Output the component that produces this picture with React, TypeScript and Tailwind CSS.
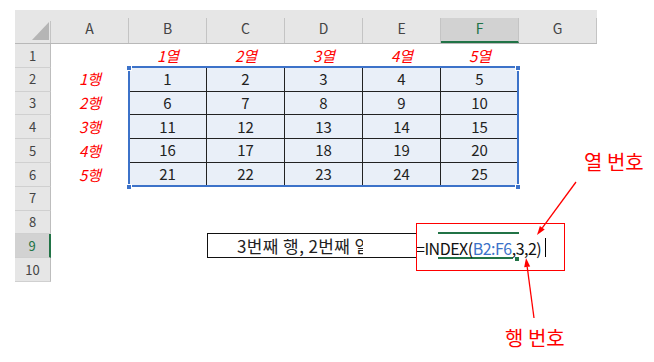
import React from 'react'

const COLS = ['A', 'B', 'C', 'D', 'E', 'F', 'G']
const TABLE = [
  [1, 2, 3, 4, 5],
  [6, 7, 8, 9, 10],
  [11, 12, 13, 14, 15],
  [16, 17, 18, 19, 20],
  [21, 22, 23, 24, 25],
]

function RowHead({ n, active }: { n: number; active?: boolean }) {
  return (
    <div
      className={
        active
          ? 'w-[36px] h-full shrink-0 flex items-center justify-center text-[13px] bg-[#d2d2d2] text-[#217346] border-b border-b-[#cfcfcf] border-r-2 border-r-[#217346]'
          : 'w-[36px] h-full shrink-0 flex items-center justify-center text-[13px] bg-[#e6e6e6] text-[#444] border-b border-b-[#d0d0d0] border-r border-r-[#bdbdbd]'
      }
    >
      {n}
    </div>
  )
}

const Empty = () => <div className="w-[78px] h-full shrink-0" />

const RedLabel = ({ children }: any) => (
  <div className="w-[78px] h-full shrink-0 flex items-center justify-center text-[15px] italic text-[#ff0000]">{children}</div>
)

export default function App() {
  return (
    <div className="relative w-[654px] h-[362px] bg-white overflow-hidden font-['Noto_Sans_CJK_KR',sans-serif]">
      <div className="pt-[10px] pl-[15px]">
        {/* column headers */}
        <div className="flex h-[34px] w-[582px] bg-[#e6e6e6] border-b border-[#b8b8b8]">
          <div className="w-[36px] flex flex-col">
            <div className="h-[11px]" />
            <div className="flex-1 border-r border-[#c4c4c4]">
              <svg width="35" height="22" viewBox="0 0 35 22">
                <polygon points="17,19 34,19 34,1" fill="#b5b5b5" />
              </svg>
            </div>
          </div>
          {COLS.map(c => (
            <div key={c} className="w-[78px] flex flex-col">
              <div className="h-[11px]" />
              {c === 'F' ? (
                <div className="flex-1 bg-[#d2d2d2] border-r border-[#c4c4c4] border-b-2 border-b-[#217346] flex items-center justify-center pb-[2px] text-[14px] text-[#217346]">{c}</div>
              ) : (
                <div className="flex-1 border-r border-[#c4c4c4] flex items-center justify-center pb-[4px] text-[14px] text-[#444]">{c}</div>
              )}
            </div>
          ))}
        </div>

        {/* row 1 */}
        <div className="flex h-[23.8px]">
          <RowHead n={1} />
          <Empty />
          {[1, 2, 3, 4, 5].map(i => <RedLabel key={i}>{i}열</RedLabel>)}
          <Empty />
        </div>

        {/* rows 2-6: data table */}
        {TABLE.map((row, r) => (
          <div key={r} className="flex h-[23.8px]">
            <RowHead n={r + 2} />
            <RedLabel>{r + 1}행</RedLabel>
            {row.map(v => (
              <div key={v} className="w-[78px] h-full shrink-0 flex items-center justify-center text-[15px] text-[#222] bg-[#e9eff8] border-r border-b border-[#222]">{v}</div>
            ))}
            <Empty />
          </div>
        ))}

        {[7, 8].map(n => (
          <div key={n} className="flex h-[23.8px]">
            <RowHead n={n} />
          </div>
        ))}

        {/* row 9 */}
        <div className="flex h-[23.8px]">
          <RowHead n={9} active />
          <Empty />
          <Empty />
          <div className="w-[210px] -mt-px h-[24.8px] shrink-0 border-y border-l border-[#111]">
            <div className="w-[155px] h-full overflow-hidden whitespace-nowrap pl-[29px] flex items-center text-[17px] tracking-[0.4px] text-[#222]">3번째 행, 2번째 열</div>
          </div>
        </div>

        <div className="flex h-[23.8px]">
          <RowHead n={10} />
        </div>
      </div>

      {/* range highlight B2:F6 */}
      <div className="absolute left-[128px] top-[66px] w-[391px] h-[121px] border-2 border-[#3c72c9]" />
      <div className="absolute left-[126px] top-[65px] w-[6px] h-[6px] bg-[#3c72c9] border border-white" />
      <div className="absolute left-[515px] top-[65px] w-[6px] h-[6px] bg-[#3c72c9] border border-white" />
      <div className="absolute left-[126px] top-[184px] w-[6px] h-[6px] bg-[#3c72c9] border border-white" />
      <div className="absolute left-[515px] top-[184px] w-[6px] h-[6px] bg-[#3c72c9] border border-white" />

      {/* active cell F9 */}
      <div className="absolute left-[438px] top-[232px] w-[81px] h-[2px] bg-[#217346]" />
      <div className="absolute left-[438px] top-[257px] w-[75px] h-[2px] bg-[#217346]" />
      <div className="absolute left-[514px] top-[256px] w-[6px] h-[6px] bg-[#217346] border border-white" />

      {/* formula in edit mode */}
      <div className="absolute left-[416px] top-[237px] leading-[22px] text-[16px] tracking-[-0.5px] text-[#111] whitespace-nowrap">
        =INDEX(<span className="text-[#3c72c9]">B2:F6</span>,3,2)
      </div>
      <div className="absolute left-[545px] top-[238px] w-px h-[19px] bg-black" />

      {/* annotation box */}
      <div className="absolute left-[416px] top-[223px] w-[149px] h-[48px] border-[1.5px] border-[#ff0000]" />

      <div className="absolute left-[584px] top-[152px] text-[20px] leading-none text-[#ff0000] whitespace-nowrap">열 번호</div>
      <div className="absolute left-[505px] top-[328px] text-[20px] leading-none text-[#ff0000] whitespace-nowrap">행 번호</div>

      <svg className="absolute left-0 top-0 pointer-events-none" width="654" height="362" viewBox="0 0 654 362">
        <line x1="576" y1="182" x2="542.3" y2="227.8" stroke="#ff0000" strokeWidth="1.3" />
        <polygon points="537,235 544.7,229.5 539.9,226" fill="#ff0000" />
        <line x1="534" y1="318" x2="527.2" y2="266.9" stroke="#ff0000" strokeWidth="1.3" />
        <polygon points="526,258 530.2,266.5 524.2,267.3" fill="#ff0000" />
      </svg>
    </div>
  )
}
